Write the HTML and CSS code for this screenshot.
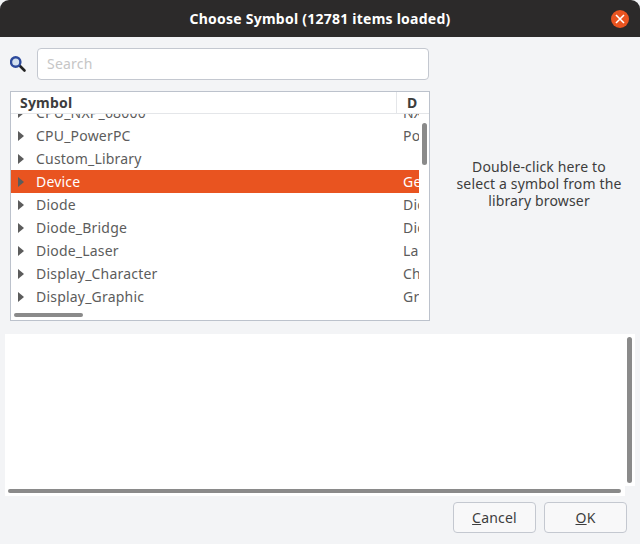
FILE: index.html
```html
<!DOCTYPE html>
<html lang="en">
<head>
    <meta charset="UTF-8">
    <title>Choose Symbol</title>
    <link rel="stylesheet" href="styles.css">
</head>
<body>
    <div class="dialog">
        <div class="titlebar">
            <span class="title">Choose Symbol (12781 items loaded)</span>
            <span class="close">
                <svg width="10" height="10" viewBox="0 0 10 10"><path d="M1 1L9 9M9 1L1 9" stroke="#fff" stroke-width="1.6" fill="none"/></svg>
            </span>
        </div>

        <div class="top">
            <div class="left">
                <div class="search">
                    <svg class="search-icon" width="17" height="18" viewBox="0 0 17 18">
                        <path d="M9.5 10.5L14.5 15.5" stroke="#222" stroke-width="2.6" stroke-linecap="round"/>
                        <circle cx="5.7" cy="7" r="4.7" fill="#d3e0ee" stroke="#2d4a9c" stroke-width="2.4"/>
                    </svg>
                    <input class="search-input" type="text" placeholder="Search">
                </div>

                <div class="tree">
                    <div class="tree-head">
                        <div class="col-symbol">Symbol</div>
                        <div class="col-desc">D</div>
                    </div>
                    <div class="tree-body">
                        <div class="rows">
                            <div class="row"><i class="arrow"></i><span class="name">CPU_NXP_68000</span><span class="desc">NX</span></div>
                            <div class="row"><i class="arrow"></i><span class="name">CPU_PowerPC</span><span class="desc">Po</span></div>
                            <div class="row"><i class="arrow"></i><span class="name">Custom_Library</span><span class="desc"></span></div>
                            <div class="row selected"><i class="arrow"></i><span class="name">Device</span><span class="desc">Ge</span></div>
                            <div class="row"><i class="arrow"></i><span class="name">Diode</span><span class="desc">Dio</span></div>
                            <div class="row"><i class="arrow"></i><span class="name">Diode_Bridge</span><span class="desc">Dio</span></div>
                            <div class="row"><i class="arrow"></i><span class="name">Diode_Laser</span><span class="desc">La</span></div>
                            <div class="row"><i class="arrow"></i><span class="name">Display_Character</span><span class="desc">Ch</span></div>
                            <div class="row"><i class="arrow"></i><span class="name">Display_Graphic</span><span class="desc">Gr</span></div>
                        </div>
                    </div>
                    <div class="tree-vbar"></div>
                    <div class="tree-hbar"></div>
                </div>
            </div>

            <div class="hint">Double-click here to select a symbol from the library browser</div>
        </div>

        <div class="details">
            <div class="details-vbar"></div>
            <div class="details-hbar"></div>
        </div>

        <div class="buttons">
            <button class="btn" type="button"><u>C</u>ancel</button>
            <button class="btn" type="button"><u>O</u>K</button>
        </div>
    </div>
</body>
</html>
```

FILE: styles.css
```css
html, body {
    margin: 0;
    padding: 0;
}
body {
    width: 640px;
    height: 544px;
    overflow: hidden;
    background-color: #f3f4f6;
    font-family: "Noto Sans", sans-serif;
    font-size: 14px;
    letter-spacing: 0.2px;
    color: #3d3d3d;
}
.dialog {
    display: flex;
    flex-direction: column;
    height: 544px;
}
.titlebar {
    flex: none;
    height: 37px;
    background-color: #2c2a2a;
    border-radius: 9px 9px 0 0;
    display: flex;
    align-items: center;
    justify-content: center;
    position: relative;
}
.title {
    color: #fff;
    font-weight: 700;
    font-size: 14px;
    letter-spacing: 0.24px;
}
.close {
    position: absolute;
    right: 11px;
    top: 10px;
    width: 18px;
    height: 18px;
    border-radius: 50%;
    background-color: #e95420;
    display: flex;
    align-items: center;
    justify-content: center;
}
.top {
    flex: none;
    display: flex;
    height: 284px;
}
.left {
    width: 420px;
    margin-left: 10px;
}
.search {
    display: flex;
    align-items: center;
    gap: 10px;
    margin-top: 11px;
    height: 32px;
}
.search-icon {
    flex: none;
}
.search-input {
    flex: none;
    width: 392px;
    height: 32px;
    box-sizing: border-box;
    padding: 0 9px 2px;
    border: 1px solid #c4c8d0;
    border-radius: 4px;
    background-color: #fff;
    font-family: inherit;
    font-size: 14px;
    letter-spacing: 0.2px;
}
.search-input::placeholder {
    color: #c6c6c6;
}
.tree {
    position: relative;
    margin-top: 11px;
    height: 230px;
    box-sizing: border-box;
    border: 1px solid #bcc2cc;
    background-color: #fff;
}
.tree-head {
    display: flex;
    height: 21px;
    border-bottom: 1px solid #e4e6e9;
    font-weight: 700;
}
.col-symbol {
    width: 386px;
    box-sizing: border-box;
    padding-left: 9px;
    line-height: 21px;
    border-right: 1px solid #e4e6e9;
}
.col-desc {
    flex: 1;
    padding-left: 10px;
    line-height: 21px;
}
.tree-body {
    height: 196px;
    overflow: hidden;
}
.rows {
    margin-top: -13px;
}
.row {
    display: flex;
    align-items: center;
    height: 23px;
    color: #5c5c5c;
}
.row.selected {
    background-color: #e95420;
    color: #fff;
    width: 408px;
}
.arrow {
    flex: none;
    width: 0;
    height: 0;
    margin-left: 7px;
    border-style: solid;
    border-width: 5px 0 5px 6px;
    border-color: transparent transparent transparent #5c5c5c;
}
.name {
    width: 367px;
    margin-left: 12px;
    flex: none;
}
.desc {
    width: 16px;
    overflow: hidden;
    white-space: nowrap;
    flex: none;
}
.tree-vbar {
    position: absolute;
    left: 411px;
    top: 31px;
    width: 5px;
    height: 42px;
    border-radius: 3px;
    background-color: #8a8a8a;
}
.tree-hbar {
    position: absolute;
    left: 3px;
    top: 221px;
    width: 69px;
    height: 4px;
    border-radius: 2px;
    background-color: #8a8a8a;
}
.details {
    position: relative;
    flex: none;
    height: 162px;
    margin: 13px 5px 0 5px;
    background-color: #fff;
}
/* empty corner where the two scrollbars meet */
.details::after {
    content: "";
    position: absolute;
    right: 0;
    bottom: 0;
    width: 10px;
    height: 10px;
    background-color: #f3f4f6;
}
.details-vbar {
    position: absolute;
    right: 3px;
    top: 3px;
    width: 5px;
    height: 146px;
    border-radius: 3px;
    background-color: #8a8a8a;
}
.details-hbar {
    position: absolute;
    left: 3px;
    bottom: 3px;
    width: 613px;
    height: 4px;
    border-radius: 2px;
    background-color: #8a8a8a;
}
.hint {
    width: 170px;
    margin: 121px 0 0 24px;
    text-align: center;
    line-height: 17px;
    letter-spacing: 0.15px;
}
.buttons {
    display: flex;
    justify-content: flex-end;
    gap: 8px;
    margin: 6px 13px 0 0;
}
.btn {
    width: 83px;
    height: 31px;
    border: 1px solid #c4c8d0;
    border-radius: 4px;
    background-color: #f8f8f9;
    font-family: inherit;
    font-size: 14px;
    letter-spacing: 0.2px;
    color: #3d3d3d;
    padding: 0;
}
```
